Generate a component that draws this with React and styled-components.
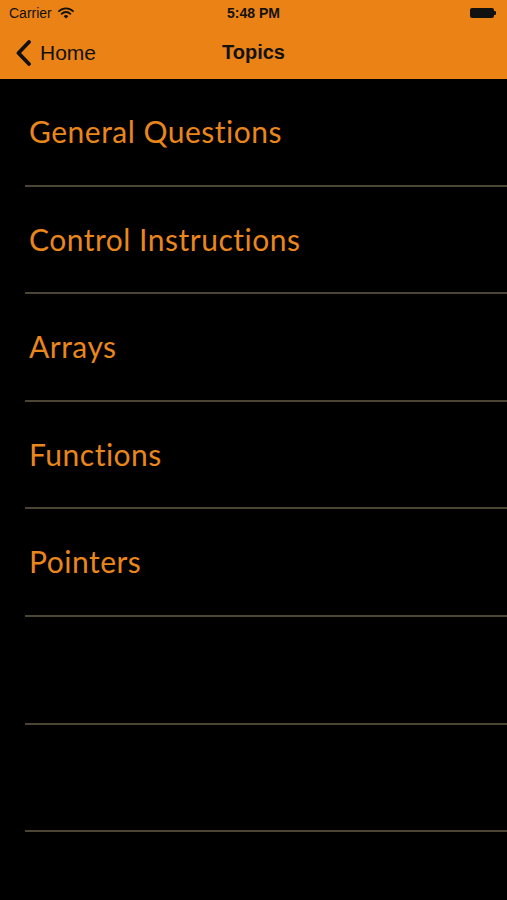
import styled, { createGlobalStyle } from 'styled-components';

const GlobalStyle = createGlobalStyle`
  html, body {
    margin: 0;
    padding: 0;
    background: #000;
  }
  body {
    font-family: "Liberation Sans", Arial, sans-serif;
  }
`;

const Screen = styled.div`
  width: 507px;
  height: 900px;
  background: #000;
  overflow: hidden;
  display: flex;
  flex-direction: column;
`;

const Header = styled.div`
  background: #eb8215;
  color: #111;
`;

const StatusBar = styled.div`
  height: 26px;
  display: grid;
  grid-template-columns: 1fr auto 1fr;
  align-items: center;
  padding: 0 9px;
  font-size: 14px;
`;

const Carrier = styled.div`
  display: flex;
  align-items: center;
  gap: 6px;
`;

const Time = styled.div`
  font-weight: 700;
`;

const Battery = styled.div`
  justify-self: end;
  display: flex;
  align-items: center;
  margin-right: 2px;
`;

const BatteryBody = styled.div`
  width: 24px;
  height: 10px;
  border-radius: 2px;
  background: #111;
`;

const BatteryTip = styled.div`
  width: 2px;
  height: 4px;
  background: #111;
  border-radius: 0 1px 1px 0;
`;

const NavBar = styled.div`
  height: 53px;
  display: grid;
  grid-template-columns: 1fr auto 1fr;
  align-items: center;
  padding: 0 15px;
`;

const Back = styled.div`
  display: flex;
  align-items: center;
  gap: 8px;
  font-size: 21px;
`;

const Title = styled.div`
  font-size: 20px;
  font-weight: 700;
`;

const List = styled.div`
  display: flex;
  flex-direction: column;
`;

const Row = styled.div`
  height: 107.6px;
  box-sizing: border-box;
  padding: 34px 0 0 29px;
  display: flex;
  align-items: flex-start;
  position: relative;
  font-family: Lato, "Open Sans", sans-serif;
  font-size: 30px;
  color: #e9861c;
  letter-spacing: 0.5px;

  &::after {
    content: '';
    position: absolute;
    left: 25px;
    right: 0;
    bottom: 0;
    height: 2px;
    background: #4a4535;
  }
`;

const topics = [
  'General Questions',
  'Control Instructions',
  'Arrays',
  'Functions',
  'Pointers',
  '',
  '',
  '',
];

function Wifi() {
  return (
    <svg width="16" height="12" viewBox="0 0 16 12">
      <path d="M1 4.2 A10 10 0 0 1 15 4.2" stroke="#111" strokeWidth="1.8" fill="none" strokeLinecap="round" />
      <path d="M3.6 6.8 A6.3 6.3 0 0 1 12.4 6.8" stroke="#111" strokeWidth="1.8" fill="none" strokeLinecap="round" />
      <path d="M8 11.5 L5.6 9.2 A3.4 3.4 0 0 1 10.4 9.2 Z" fill="#111" />
    </svg>
  );
}

function Chevron() {
  return (
    <svg width="17" height="26" viewBox="0 0 17 26">
      <path d="M14 2 L3.5 13 L14 24" stroke="#111" strokeWidth="3.8" fill="none" strokeLinecap="round" strokeLinejoin="round" />
    </svg>
  );
}

export default function App() {
  return (
    <Screen>
      <GlobalStyle />
      <Header>
        <StatusBar>
          <Carrier>Carrier <Wifi /></Carrier>
          <Time>5:48 PM</Time>
          <Battery>
            <BatteryBody />
            <BatteryTip />
          </Battery>
        </StatusBar>
        <NavBar>
          <Back><Chevron />Home</Back>
          <Title>Topics</Title>
          <div />
        </NavBar>
      </Header>
      <List>
        {topics.map((t, i) => (
          <Row key={i}>{t}</Row>
        ))}
      </List>
    </Screen>
  );
}
